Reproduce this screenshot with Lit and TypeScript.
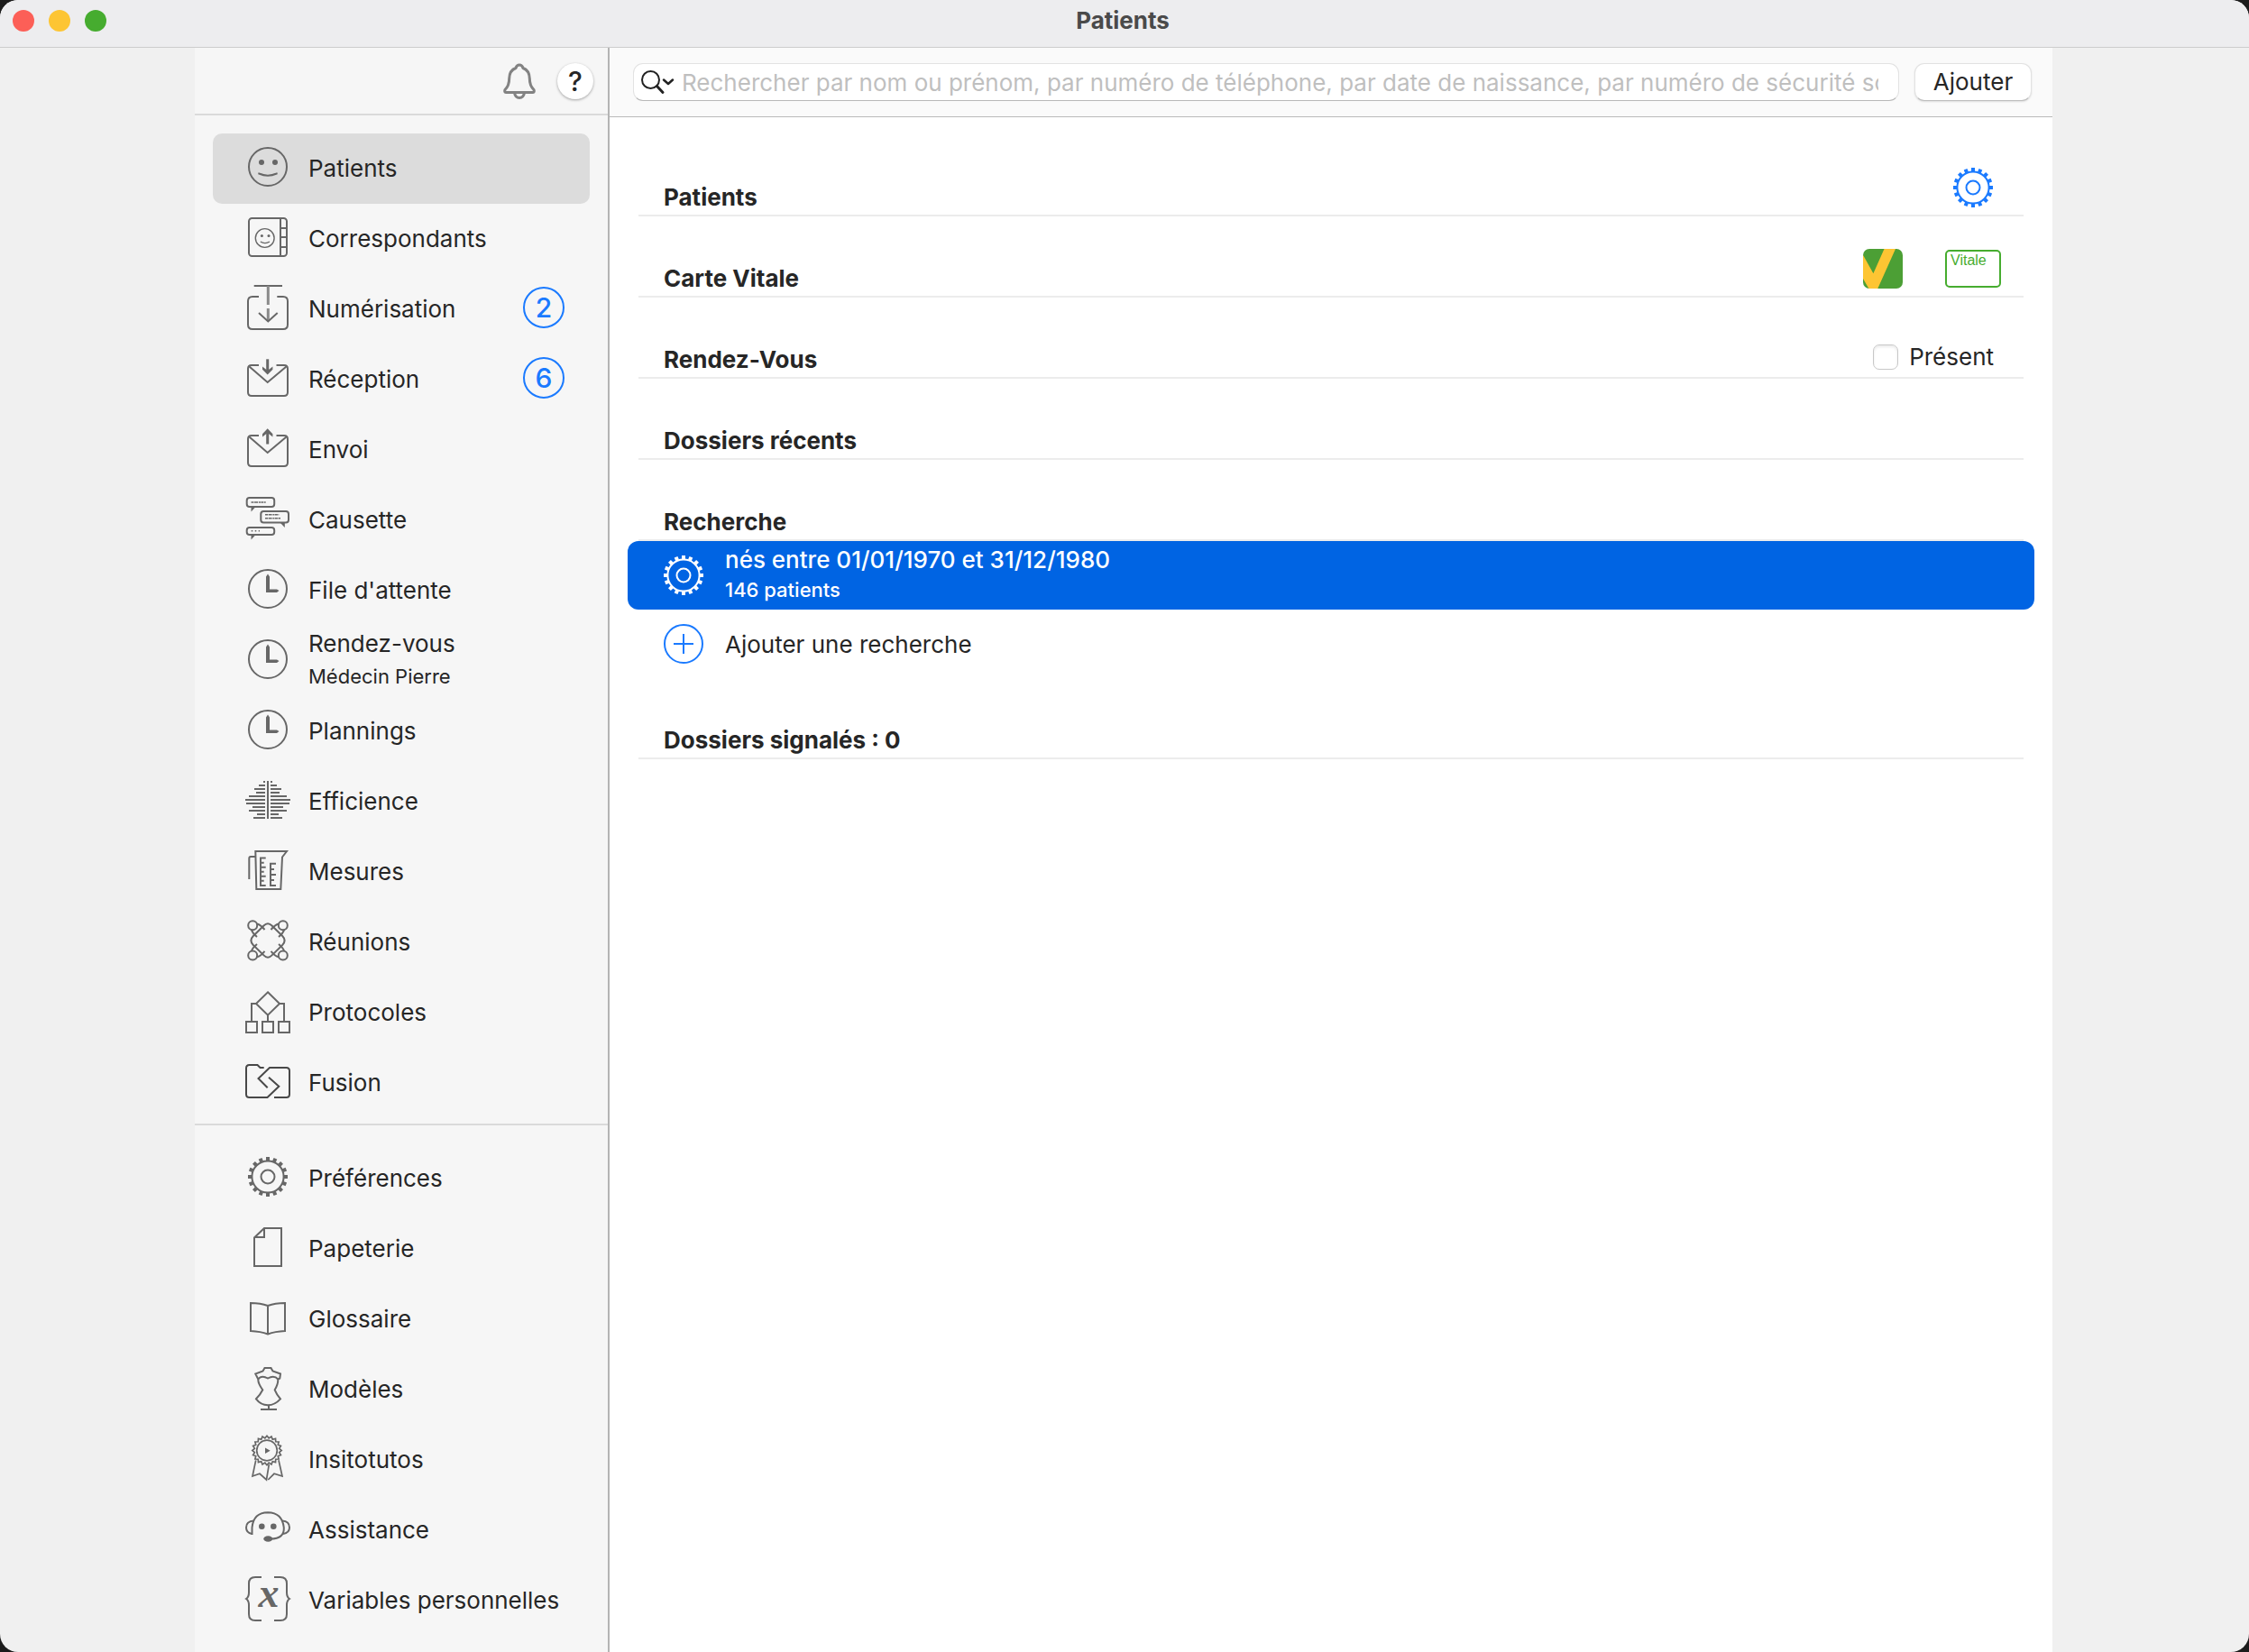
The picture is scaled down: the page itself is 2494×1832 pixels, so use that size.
import { LitElement, html, css, svg, nothing } from "lit";
import type { SVGTemplateResult } from "lit";
import { customElement, property, state } from "lit/decorators.js";
import { classMap } from "lit/directives/class-map.js";

const tooth = (n: number, r1: number, r2: number, w: number) =>
  Array.from({ length: n }, (_, i) => {
    const a = (i * 2 * Math.PI) / n;
    const c = Math.cos(a);
    const s = Math.sin(a);
    return svg`<line x1=${25 + r1 * c} y1=${25 + r1 * s} x2=${25 + r2 * c} y2=${25 + r2 * s} stroke-width=${w}></line>`;
  });

const scallop = (cx: number, cy: number, n: number, outer: number, inner: number) => {
  const pts: string[] = [];
  for (let i = 0; i < n * 2; i++) {
    const r = i % 2 ? inner : outer;
    const a = (i * Math.PI) / n - Math.PI / 2;
    pts.push(`${(cx + r * Math.cos(a)).toFixed(2)},${(cy + r * Math.sin(a)).toFixed(2)}`);
  }
  return pts.join(" ");
};

const bars: number[] = [2, 7, 12, 10, 18, 22, 21, 14, 18, 9, 13];

const clock = svg`
  <circle cx="25" cy="25" r="21"></circle>
  <path class="fill" d="M23 29V11.5L25 8.500l2 3V25.500h8l2.500 1.500-2.500 2z"></path>`;

const gear = svg`
  <circle cx="25" cy="25" r="17.6"></circle>
  <circle cx="25" cy="25" r="7.500"></circle>
  ${tooth(16, 18, 22, 4)}`;

const envelope = svg`
  <path d="M15 11H7Q3 11 3 15V41Q3 45 7 45H43Q47 45 47 41V15Q47 11 43 11H34.500"></path>
  <path d="M4.500 12.500L24.700 30L45.500 12.500"></path>`;

const ICONS: Record<string, SVGTemplateResult> = {
  smile: svg`
    <circle cx="25" cy="25" r="21"></circle>
    <circle class="fill" cx="18" cy="20" r="3"></circle>
    <circle class="fill" cx="33" cy="20" r="3"></circle>
    <path d="M15.300 31.500V32.500Q25 37 34.700 32.500V31.500"></path>`,
  contacts: svg`
    <rect x="4" y="4" width="42" height="42" rx="3.500"></rect>
    <path d="M39 4V46M39 15H46M39 25H46M39 36H46"></path>
    <g stroke-width="1.400">
      <circle cx="21.700" cy="26" r="10.400"></circle>
      <path d="M16.800 30Q21.900 33.200 27 30"></path>
    </g>
    <circle class="fill" cx="18.400" cy="23.400" r="1.500"></circle>
    <circle class="fill" cx="26" cy="23.400" r="1.500"></circle>`,
  scan: svg`
    <path d="M9.700 1H41"></path>
    <path class="soft" stroke-width="3" d="M25.300 1V22M25.300 26V40"></path>
    <path d="M15 31L25.300 40.500L35.700 31"></path>
    <path d="M15 13H8Q3 13 3 18V44Q3 49 8 49H42Q47 49 47 44V18Q47 13 42 13H35.300"></path>`,
  inbox: svg`${envelope}
    <path stroke-width="3" d="M24.700 4.300V19"></path>
    <path class="fill" d="M19 12.500L24.700 17L30.400 12.500V15.800L24.700 21.500L19 15.800z"></path>`,
  outbox: svg`${envelope}
    <path stroke-width="3" d="M24.700 6V20.500"></path>
    <path class="fill" d="M19 12.500L24.700 8L30.400 12.500V9.200L24.700 3.200L19 9.200z"></path>`,
  chat: svg`
    <rect x="1.700" y="2" width="30.500" height="10" rx="3"></rect>
    <path class="fill" d="M6.500 12V17.500L11.500 12z"></path>
    <rect x="17.300" y="17" width="30.700" height="12.600" rx="3"></rect>
    <path class="fill" d="M38.500 29.500L43.800 35V29.500z"></path>
    <rect x="1.700" y="35" width="30.500" height="8" rx="3"></rect>
    <path class="fill" d="M6.500 43V48.500L11.500 43z"></path>
    <g stroke-width="1.600">
      <path stroke-dasharray="3 .6 4 .8 2 .5" d="M6.500 7H22.700M22 20.700H37.300M22 24.700H39"></path>
      <path stroke-dasharray="1.600 2.400" d="M6.700 38.700H16"></path>
    </g>`,
  clock,
  efficiency: svg`
    <path d="M25 4V46"></path>
    ${bars.map((w, i) => svg`<path d=${`M22 ${5 + i * 4}h${-w}M28 ${5 + i * 4}h${w}`}></path>`)}`,
  beaker: svg`
    <path d="M11.300 4H46L41 10.500L39.300 46H12.300z"></path>
    <path d="M11 10H6Q4.300 10 4.300 12V35"></path>
    <path d="M22.700 11.500H17V42H22.700M17 16.700H20.700M17 21.700H22.700M17 26.700H20.700M17 31.700H22.700M17 36.700H20.700"></path>
    <path d="M34 17.700H28V42H34M28 24H32M28 30H34M28 36H32"></path>`,
  meeting: svg`
    <circle cx="8.200" cy="8.200" r="5"></circle>
    <circle cx="41.800" cy="8.200" r="5"></circle>
    <circle cx="8.200" cy="41.600" r="5"></circle>
    <circle cx="41.800" cy="41.600" r="5"></circle>
    <path d="M20.500 8.500Q25 4 29.500 8.500L41.200 20Q46 25 41.200 30L29.500 41.400Q25 46 20.500 41.400L8.800 30Q4 25 8.800 20z"></path>
    <path d="M13 6.500Q17 7.500 21.500 13M6.800 13Q8 17 13 21M37 6.500Q33 7.500 28.500 13M43.200 13Q42 17 37 21M13 43.300Q17 42.300 21.500 36.800M6.800 36.800Q8 33 13 29M37 43.300Q33 42.300 28.500 36.800M43.200 36.800Q42 33 37 29"></path>`,
  protocol: svg`
    <path d="M25 4.300L38 17L25 29.700L12 17z"></path>
    <path d="M12 17H7V37M38 17H43V37M25 29.700V37"></path>
    <path d="M1 37H13V49H1zM19 37H31V49H19zM37 37H49V49H37z"></path>`,
  merge: svg`
    <g class="dark">
      <path d="M20.700 10H16.500L13.500 7H4.500Q1 7 1 10.500V39.500Q1 43 4.500 43H24.500L37.300 30.700L26 20.700"></path>
      <path d="M24.700 32.300L14.500 22L27 10H45.500Q49 10 49 13.500V39.500Q49 43 45.500 43H32"></path>
    </g>`,
  gear,
  paper: svg`<path d="M21 4H40V46H10V14.500zV14H10"></path>`,
  book: svg`<path d="M25 12Q17 9 6 9V40Q17 40.500 25 43.500Q33 40.500 44 40V9Q33 9 25 12V44.500"></path>`,
  mannequin: svg`
    <path d="M21.500 3H28.500L30.500 6.500L39 9.500L38.300 14.500L36.300 15.500Q36.500 21 32.700 27.300Q34.500 32 39 37.300Q33 44 25 44.300Q17 44 12 37.300Q16.500 33 19.300 27.300Q14 20 14.300 15.500L11.300 9.500L19.500 6.500z"></path>
    <path d="M14.300 15.500Q18 10.500 25 14.500Q32 10.500 36.300 15.500M26 44.500V49M17 49H35"></path>`,
  award: svg`
    <g stroke-width="1.700">
      <polygon points=${scallop(24, 16.5, 20, 16.2, 13.8)}></polygon>
      <circle cx="24" cy="16.500" r="11.300"></circle>
      <path d="M11.700 27.300L8 45L16 42.300L23.500 49L26.300 32M37 27.300L41 45L32 42.300L25.300 49"></path>
    </g>
    <path class="fill" d="M22 13.500L27.700 16.800L22 20z"></path>`,
  headset: svg`
    <path d="M7.500 32V24Q9 7.500 25 7.200Q41 7.500 42.800 24Q43.500 36.500 28 36.500"></path>
    <path d="M9.500 16.500Q1 17 1 24Q1 30 7.500 31M41 16.500Q49 17 49 24Q49 30 42 31"></path>
    <circle class="fill" cx="18.300" cy="22.700" r="3.300"></circle>
    <circle class="fill" cx="31.300" cy="22.700" r="3.300"></circle>
    <ellipse class="fill" cx="25.300" cy="36.500" rx="5" ry="3.300"></ellipse>`,
  variable: svg`
    <path d="M18 1H11Q4 1 4 8V18Q4 23 1 25Q4 27 4 32V42Q4 49 11 49H18M32 1H39Q46 1 46 8V18Q46 23 49 25Q46 27 46 32V42Q46 49 39 49H32"></path>
    <text class="glyph" x="26" y="34" text-anchor="middle">x</text>`,
  plus: svg`
    <circle cx="25" cy="25" r="21"></circle>
    <path d="M25 14V36M14 25H36"></path>`,
};

@customElement("line-icon")
class LineIcon extends LitElement {
  @property() name = "";

  static styles = css`
    :host {
      display: block;
      flex: none;
      width: 50px;
      height: 50px;
      color: #676767;
    }
    svg {
      display: block;
      width: 100%;
      height: 100%;
      fill: none;
      stroke: currentColor;
      stroke-width: 2;
      overflow: visible;
    }
    .fill {
      fill: currentColor;
      stroke: none;
    }
    .soft {
      stroke: #8a8a8a;
    }
    .dark {
      stroke: #484848;
    }
    .glyph {
      fill: currentColor;
      stroke: none;
      font: italic bold 46px "Liberation Serif", serif;
    }
  `;

  render() {
    return html`<svg viewBox="0 0 50 50" aria-hidden="true">${ICONS[this.name] ?? nothing}</svg>`;
  }
}

interface Entry {
  icon: string;
  label: string;
  sub?: string;
  badge?: number;
}

const MAIN: Entry[] = [
  { icon: "smile", label: "Patients" },
  { icon: "contacts", label: "Correspondants" },
  { icon: "scan", label: "Numérisation", badge: 2 },
  { icon: "inbox", label: "Réception", badge: 6 },
  { icon: "outbox", label: "Envoi" },
  { icon: "chat", label: "Causette" },
  { icon: "clock", label: "File d'attente" },
  { icon: "clock", label: "Rendez-vous", sub: "Médecin Pierre" },
  { icon: "clock", label: "Plannings" },
  { icon: "efficiency", label: "Efficience" },
  { icon: "beaker", label: "Mesures" },
  { icon: "meeting", label: "Réunions" },
  { icon: "protocol", label: "Protocoles" },
  { icon: "merge", label: "Fusion" },
];

const TOOLS: Entry[] = [
  { icon: "gear", label: "Préférences" },
  { icon: "paper", label: "Papeterie" },
  { icon: "book", label: "Glossaire" },
  { icon: "mannequin", label: "Modèles" },
  { icon: "award", label: "Insitotutos" },
  { icon: "headset", label: "Assistance" },
  { icon: "variable", label: "Variables personnelles" },
];

@customElement("app-root")
class AppRoot extends LitElement {
  @state() private current = "Patients";

  static styles = css`
    :host {
      display: block;
      background: #1c1c1c;
      color: #262626;
      font: 400 26px/34px Inter, "Liberation Sans", sans-serif;
    }
    *,
    *::before {
      box-sizing: border-box;
    }
    button,
    input {
      font: inherit;
      color: inherit;
      margin: 0;
      padding: 0;
      border: 0;
      background: none;
    }
    button {
      cursor: pointer;
    }
    h1,
    h2 {
      margin: 0;
      font-size: 26px;
      line-height: 34px;
      font-weight: 700;
    }
    .window {
      display: flex;
      flex-direction: column;
      min-height: 100vh;
      border-radius: 20px;
      overflow: hidden;
      background: #f0f0f0;
    }
    .titlebar {
      display: grid;
      grid-template-columns: 1fr auto 1fr;
      align-items: center;
      height: 53px;
      padding: 0 18px 6px 14px;
      background: #ededef;
      border-bottom: 1px solid #cdcdcd;
    }
    .titlebar h1 {
      color: #4a4a4a;
    }
    .lights {
      display: flex;
      gap: 16px;
    }
    .light {
      width: 24px;
      height: 24px;
      border-radius: 50%;
    }
    .close {
      background: #fc5f57;
    }
    .minimise {
      background: #fdc533;
    }
    .zoom {
      background: #46ac2f;
    }
    .body {
      flex: 1;
      display: grid;
      grid-template-columns: 460px minmax(0, 1fr);
      margin: 0 218px 0 216px;
    }
    .sidebar {
      background: #f6f6f6;
      border-right: 2px solid #b4b4b4;
    }
    .tools {
      display: flex;
      align-items: center;
      justify-content: flex-end;
      gap: 24px;
      height: 75px;
      padding-right: 16px;
      border-bottom: 2px solid #dadada;
    }
    .bell {
      display: block;
      width: 36px;
      height: 40px;
      color: #828282;
    }
    .bell svg,
    .lookup svg,
    .vitale svg {
      display: block;
    }
    .help {
      width: 40px;
      height: 40px;
      border-radius: 50%;
      background: #fff;
      box-shadow: 0 1px 3px rgba(0, 0, 0, 0.35);
      font-size: 30px;
      font-weight: 500;
    }
    .group {
      margin: 0;
      padding: 20px 20px 6px;
      list-style: none;
    }
    .group + .group {
      border-top: 2px solid #dadada;
    }
    .item {
      display: flex;
      align-items: center;
      gap: 20px;
      width: 100%;
      height: 78px;
      padding: 0 28px 4px 36px;
      border-radius: 10px;
      text-align: left;
      white-space: nowrap;
    }
    .item.selected {
      background: #dcdcdc;
    }
    .label {
      flex: 1;
      padding-top: 4px;
    }
    .sub {
      display: block;
      font-size: 22px;
      line-height: 38px;
    }
    .badge {
      width: 46px;
      height: 46px;
      border: 2px solid #1a7aff;
      border-radius: 50%;
      color: #1a7aff;
      font-size: 30px;
      font-weight: 500;
      line-height: 42px;
      text-align: center;
    }
    .main {
      background: #fff;
    }
    .toolbar {
      display: flex;
      align-items: center;
      gap: 17px;
      height: 77px;
      padding: 0 23px 0 26px;
      background: #fafafa;
      border-bottom: 1px solid #bababa;
    }
    .search {
      flex: 1;
      display: flex;
      align-items: center;
      height: 42px;
      padding: 0 22px 0 8px;
      border: 1px solid #e2e2e2;
      border-bottom-color: #b8b8b8;
      border-radius: 11px;
      background: #fff;
    }
    .lookup {
      flex: none;
      width: 45px;
    }
    .field {
      flex: 1;
      min-width: 0;
      height: 38px;
      outline: none;
    }
    .field::placeholder {
      color: #bfbfbf;
      opacity: 1;
    }
    .add {
      height: 42px;
      width: 130px;
      border: 1px solid #e2e2e2;
      border-bottom-color: #bdbdbd;
      border-radius: 11px;
      background: #fff;
      box-shadow: 0 1px 2px rgba(0, 0, 0, 0.12);
    }
    .content {
      padding: 20px 32px;
    }
    .section {
      display: flex;
      align-items: flex-end;
      justify-content: space-between;
      height: 90px;
      padding: 0 25px 0 28px;
      border-bottom: 2px solid #ececec;
    }
    .section h2 {
      padding-bottom: 2px;
    }
    .actions {
      display: flex;
      align-items: center;
      gap: 38px;
      padding-bottom: 8px;
    }
    .action {
      display: flex;
      align-items: center;
      justify-content: center;
      width: 62px;
      height: 44px;
    }
    .blue {
      color: #1a7aff;
    }
    .card {
      display: flex;
      align-items: flex-start;
      width: 62px;
      height: 42px;
      padding: 0 4px;
      border: 2px solid #46ac2f;
      border-radius: 5px;
      color: #46ac2f;
      font: 16px/20px "Liberation Sans", Arial, sans-serif;
    }
    .present {
      display: flex;
      align-items: center;
      gap: 12px;
      line-height: 28px;
      padding-right: 8px;
    }
    .tick {
      appearance: none;
      width: 28px;
      height: 28px;
      border: 1px solid #c8c8c8;
      border-radius: 7px;
      background: #fff;
      box-shadow: inset 0 2px 3px rgba(0, 0, 0, 0.08);
    }
    .row {
      display: flex;
      align-items: center;
      gap: 21px;
      width: calc(100% + 24px);
      height: 76px;
      margin: 0 -12px;
      padding: 0 37px;
      border-radius: 12px;
      text-align: left;
    }
    .row.active {
      background: #0064e3;
      color: #fff;
      font-weight: 500;
    }
    .row.active line-icon {
      color: #fff;
    }
    .lines {
      padding-top: 2px;
    }
    .count {
      display: block;
      font-size: 22px;
      line-height: 32px;
    }
    .row.active .lines {
      padding-bottom: 4px;
    }
  `;

  private entry(e: Entry) {
    return html`<li>
      <button
        class=${classMap({ item: true, selected: this.current === e.label })}
        @click=${() => (this.current = e.label)}
      >
        <line-icon name=${e.icon}></line-icon>
        <span class="label">${e.label}${e.sub ? html`<span class="sub">${e.sub}</span>` : nothing}</span>
        ${e.badge ? html`<span class="badge">${e.badge}</span>` : nothing}
      </button>
    </li>`;
  }

  render() {
    return html`
      <div class="window">
        <header class="titlebar">
          <div class="lights">
            <button class="light close" aria-label="Fermer"></button>
            <button class="light minimise" aria-label="Réduire"></button>
            <button class="light zoom" aria-label="Agrandir"></button>
          </div>
          <h1>Patients</h1>
        </header>
        <div class="body">
          <nav class="sidebar">
            <div class="tools">
              <button class="bell" aria-label="Notifications">
                <svg width="36" height="40" viewBox="0 0 36 40" fill="none" stroke="currentColor" stroke-width="3" stroke-linejoin="round">
                  <path d="M18 2Q21 2 22 5.500Q29 8 29.300 17Q29.300 25 34 29.500Q35 32.500 32.500 32.500H3.500Q1 32.500 2 29.500Q6.700 25 6.700 17Q7 8 14 5.500Q15 2 18 2z"></path>
                  <path d="M12.500 33Q13.500 38.500 18 38.500Q22.500 38.500 23.500 33"></path>
                </svg>
              </button>
              <button class="help" aria-label="Aide">?</button>
            </div>
            <ul class="group">${MAIN.map((e) => this.entry(e))}</ul>
            <ul class="group">${TOOLS.map((e) => this.entry(e))}</ul>
          </nav>
          <main class="main">
            <div class="toolbar">
              <div class="search">
                <button class="lookup" aria-label="Options de recherche">
                  <svg width="38" height="28" viewBox="0 0 38 28" fill="none" stroke="#222" stroke-width="2" stroke-linecap="round" stroke-linejoin="round">
                    <circle cx="10.500" cy="11.500" r="9.500"></circle>
                    <path d="M17.500 18.500L24 25.500" stroke-width="3"></path>
                    <path d="M25 11.500L30 16L35 11.500" stroke-width="2.500"></path>
                  </svg>
                </button>
                <input
                  class="field"
                  type="text"
                  aria-label="Rechercher"
                  placeholder="Rechercher par nom ou prénom, par numéro de téléphone, par date de naissance, par numéro de sécurité sociale"
                />
              </div>
              <button class="add">Ajouter</button>
            </div>
            <div class="content">
              <section class="section">
                <h2>Patients</h2>
                <div class="actions">
                  <button class="action" aria-label="Réglages"><line-icon class="blue" name="gear"></line-icon></button>
                </div>
              </section>
              <section class="section">
                <h2>Carte Vitale</h2>
                <div class="actions">
                  <button class="action vitale" aria-label="Apcv">
                    <svg width="44" height="44" viewBox="0 0 44 44">
                      <defs><clipPath id="r"><rect width="44" height="44" rx="7"></rect></clipPath></defs>
                      <g clip-path="url(#r)">
                        <rect width="44" height="44" fill="#4c9f35"></rect>
                        <path fill="#fdc533" d="M0 6.700L11.400 27.300L23.500 0H36L16.300 44H6.400L0 33z"></path>
                      </g>
                    </svg>
                  </button>
                  <button class="card">Vitale</button>
                </div>
              </section>
              <section class="section">
                <h2>Rendez-Vous</h2>
                <div class="actions">
                  <label class="present"><input class="tick" type="checkbox" />Présent</label>
                </div>
              </section>
              <section class="section"><h2>Dossiers récents</h2></section>
              <section class="section"><h2>Recherche</h2></section>
              <button class="row active">
                <line-icon name="gear"></line-icon>
                <span class="lines">nés entre 01/01/1970 et 31/12/1980<span class="count">146 patients</span></span>
              </button>
              <button class="row">
                <line-icon class="blue" name="plus"></line-icon>
                <span class="lines">Ajouter une recherche</span>
              </button>
              <section class="section"><h2>Dossiers signalés : 0</h2></section>
            </div>
          </main>
        </div>
      </div>
    `;
  }
}
